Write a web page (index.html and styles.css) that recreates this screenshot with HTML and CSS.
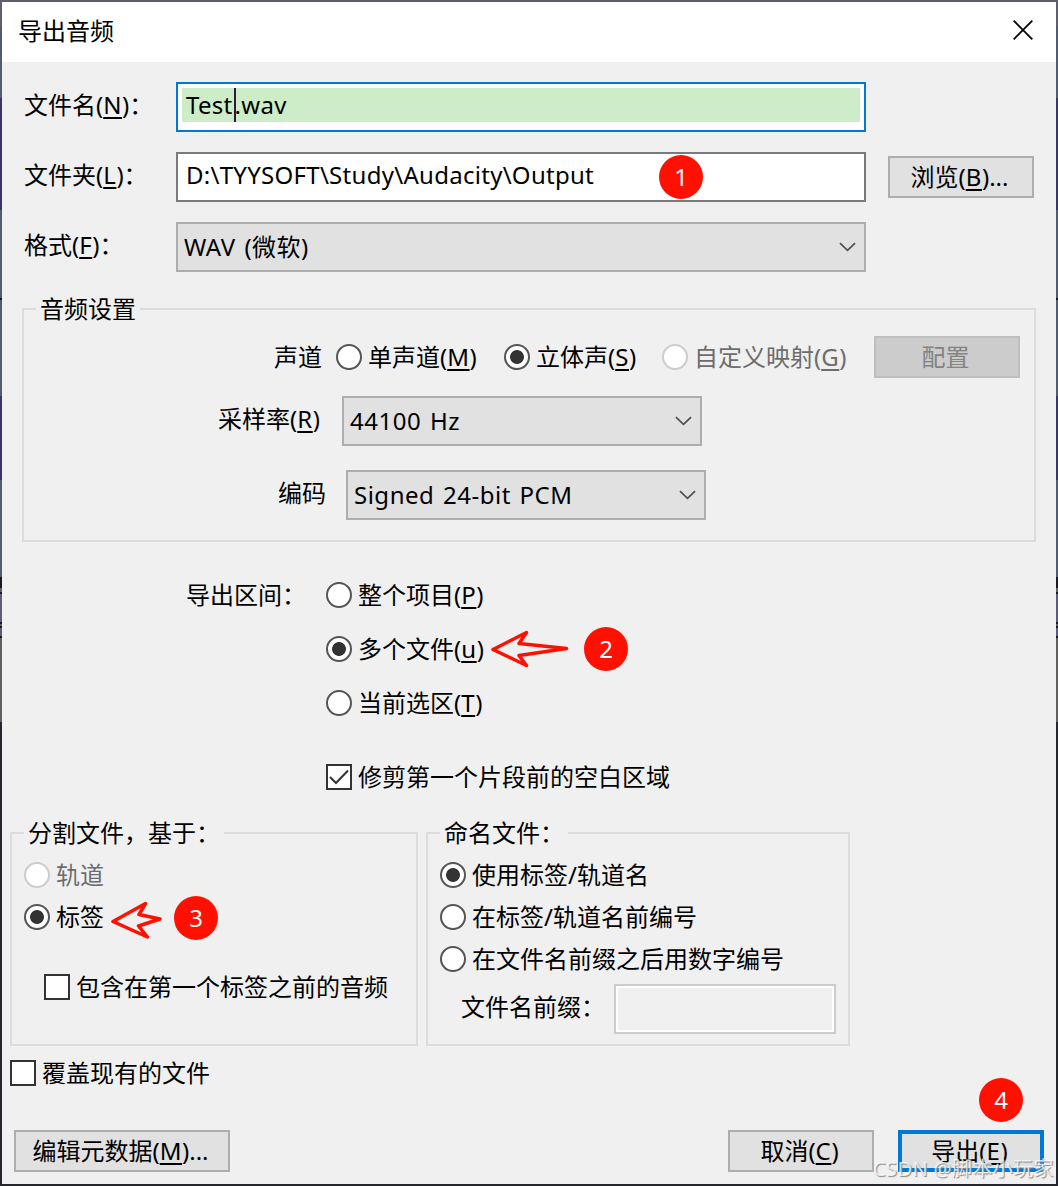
FILE: index.html
```html
<!DOCTYPE html>
<html lang="zh-CN">
<head>
  <meta charset="UTF-8">
  <meta name="viewport" content="width=device-width, initial-scale=1">
  <title>导出音频</title>
  <link rel="stylesheet" href="styles.css">
</head>
<body>
  <div class="window">
    <header class="titlebar">
      <h1>导出音频</h1>
      <svg class="close" viewBox="0 0 20 20"><path d="M.7.7l18.6 18.6M19.3.7L.7 19.3"/></svg>
    </header>

    <main class="dialog">
      <!-- File -->
      <section class="file-grid">
        <span class="label">文件名(<u>N</u>)：</span>
        <div class="textbox focused"><div class="value">Test<i class="caret"></i>.wav</div></div>
        <span></span>

        <span class="label">文件夹(<u>L</u>)：</span>
        <div class="textbox path">D:\TYYSOFT\Study\Audacity\Output<b class="badge badge-1">1</b></div>
        <button class="btn browse">浏览(<u>B</u>)...</button>

        <span class="label">格式(<u>F</u>)：</span>
        <div class="select">WAV (微软)<svg class="chevron" viewBox="0 0 18 10"><path d="M1 1l8 7.6L17 1"/></svg></div>
        <span></span>
      </section>

      <!-- Audio options -->
      <section class="group audio">
        <h2 class="legend">音频设置</h2>
        <div class="row channels">
          <span class="label">声道</span>
          <label class="option mono"><i class="radio"></i>单声道(<u>M</u>)</label>
          <label class="option stereo"><i class="radio checked"></i>立体声(<u>S</u>)</label>
          <label class="option custom disabled"><i class="radio"></i>自定义映射(<u>G</u>)</label>
          <button class="btn" disabled>配置</button>
        </div>
        <div class="row rate">
          <span class="label">采样率(<u>R</u>)</span>
          <div class="select">44100 Hz<svg class="chevron" viewBox="0 0 18 10"><path d="M1 1l8 7.6L17 1"/></svg></div>
        </div>
        <div class="row encoding">
          <span class="label">编码</span>
          <div class="select">Signed 24-bit PCM<svg class="chevron" viewBox="0 0 18 10"><path d="M1 1l8 7.6L17 1"/></svg></div>
        </div>
      </section>

      <!-- Export range -->
      <section class="range">
        <span class="label">导出区间：</span>
        <div class="range-options">
          <label class="option"><i class="radio"></i>整个项目(<u>P</u>)</label>
          <label class="option"><i class="radio checked"></i>多个文件(<u>u</u>)
            <svg class="arrow arrow-2" viewBox="0 0 78 38"><path d="M2 19.500L35.500 2.500 28 13.500 75.500 18.500 28 25.500 35.500 35.500z"/></svg>
            <b class="badge badge-2">2</b>
          </label>
          <label class="option"><i class="radio"></i>当前选区(<u>T</u>)</label>
          <label class="option trim"><i class="check"><svg viewBox="0 0 22 22"><path d="M2 11l6 6L20 4.500"/></svg></i>修剪第一个片段前的空白区域</label>
        </div>
      </section>

      <!-- Multiple files -->
      <section class="multi">
        <div class="group split">
          <h2 class="legend">分割文件，基于：</h2>
          <label class="option disabled"><i class="radio"></i>轨道</label>
          <label class="option"><i class="radio checked"></i>标签
            <svg class="arrow arrow-3" viewBox="0 0 52 38"><path d="M2 20.500L34.500 2.500 28 13.500 49 18 27.500 25 36.500 36z"/></svg>
            <b class="badge badge-3">3</b>
          </label>
          <label class="option include"><i class="check"></i>包含在第一个标签之前的音频</label>
        </div>
        <div class="group naming">
          <h2 class="legend">命名文件：</h2>
          <label class="option"><i class="radio checked"></i>使用标签/轨道名</label>
          <label class="option"><i class="radio"></i>在标签/轨道名前编号</label>
          <label class="option"><i class="radio"></i>在文件名前缀之后用数字编号</label>
          <div class="prefix"><span class="label">文件名前缀：</span><div class="textbox off"></div></div>
        </div>
      </section>

      <label class="option overwrite"><i class="check"></i>覆盖现有的文件</label>

      <footer class="actions">
        <button class="btn metadata">编辑元数据(<u>M</u>)...</button>
        <button class="btn cancel">取消(<u>C</u>)</button>
        <button class="btn primary">导出(<u>E</u>)<b class="badge badge-4">4</b></button>
      </footer>
    </main>
    <span class="watermark">CSDN @脚本小玩家</span>
  </div>
</body>
</html>
```
FILE: styles.css
```css
:root {
  --face: #f0f0f0;
  --control: #e1e1e1;
  --border: #adadad;
  --line: #dcdcdc;
  --blue: #0078d7;
  --red: #ff1000;
}
* {
  box-sizing: border-box;
  margin: 0;
  padding: 0;
}
body {
  width: 1058px;
  height: 1186px;
  overflow: hidden;
  padding: 2px;
  background: linear-gradient(#5f5f6b 0 26px, #525c6c 26px 98px, #3a3766 98px 210px, #525c6c 210px 298px, #15151c 298px 300px, #525c6c 300px 396px, #3a3766 396px 480px, #525c6c 480px 577px, #1a1a20 577px 588px, #62605f 588px 592px, #1a1a20 592px 594px, #5c5c78 594px 622px, #1a1a20 622px 624px, #62605f 624px 626px, #1a1a20 626px 628px, #5c5c78 628px 636px, #1a1a20 636px 638px, #62605f 638px 722px, #26262e 722px);
  color: #000;
  font: 24px/32px "Noto Sans", "Noto Sans CJK SC", sans-serif;
}
.window {
  position: relative;
  height: 1182px;
  background: var(--face);
}
h1, h2 {
  font-size: 24px;
  font-weight: 400;
}
u {
  letter-spacing: .6px;
  text-decoration-thickness: 2px;
  text-underline-offset: 3px;
}
.titlebar {
  display: flex;
  justify-content: space-between;
  align-items: center;
  height: 60px;
  padding: 0 23px 4px 16px;
  background: #fff;
}
.titlebar h1 { padding-top: 2px; }
.close {
  width: 20px;
  height: 20px;
  stroke: #000;
  stroke-width: 1.8;
}
.label, .option, .legend { white-space: nowrap; }

/* Controls */
.textbox, .select {
  height: 50px;
  border: 2px solid #7a7a7a;
  background: #fff;
}
.textbox.focused {
  padding: 4px;
  border-color: var(--blue);
}
.value {
  height: 34px;
  padding-left: 4px;
  background: #ccedc8;
  letter-spacing: .3px;
  line-height: 34px;
}
.caret {
  display: inline-block;
  width: 2px;
  height: 34px;
  margin: 0 -1px 0 1px;
  background: #301838;
  vertical-align: top;
}
.path {
  position: relative;
  padding: 5px 8px;
  letter-spacing: .28px;
}
.select {
  display: flex;
  justify-content: space-between;
  align-items: center;
  padding: 0 8px 0 6px;
  border-color: var(--border);
  background: var(--control);
  letter-spacing: .5px;
  word-spacing: 2px;
}
.chevron {
  width: 17px;
  height: 10px;
  fill: none;
  stroke: #505050;
  stroke-width: 1.8;
}
.btn {
  display: flex;
  justify-content: center;
  align-items: center;
  width: 146px;
  height: 42px;
  padding-right: 3px;
  border: 2px solid var(--border);
  background: var(--control);
  color: #000;
  font: inherit;
  white-space: nowrap;
}
.btn:disabled {
  border-color: #bfbfbf;
  background: #ccc;
  color: #838383;
}
.option {
  display: flex;
  align-items: center;
  position: relative;
}
.option.disabled { color: #6d6d6d; }
.radio, .check {
  flex: none;
  width: 26px;
  height: 26px;
  margin-right: 6px;
  border: 2px solid #333;
  background: #fff;
}
.radio {
  border-color: #555;
  border-radius: 50%;
}
.radio.checked {
  background: radial-gradient(circle, #333 0 6.5px, #fff 7.3px);
}
.disabled .radio { border-color: #ccc; }
.check svg {
  display: block;
  fill: none;
  stroke: #333;
  stroke-width: 2;
}
.group {
  border: 2px solid var(--line);
}
.legend {
  width: fit-content;
  background: var(--face);
}

/* File */
.file-grid {
  display: grid;
  grid-template-columns: 152px 690px 146px;
  grid-auto-rows: 50px;
  row-gap: 20px;
  padding: 20px 22px 0;
}
.file-grid .label { padding-top: 7px; }
.browse { margin: 4px 0 0 22px; }

/* Audio options */
.audio {
  height: 234px;
  margin: 36px 20px 0;
}
.audio .legend {
  margin: -17px 0 0 12px;
  padding: 0 4px;
}
.row {
  display: flex;
  align-items: center;
}
.channels {
  height: 42px;
  margin-top: 11px;
  padding-left: 250px;
}
.mono { width: 168px; margin-left: 14px; }
.stereo { width: 158px; }
.custom { width: 212px; }
.rate {
  margin-top: 18px;
  padding-left: 194px;
}
.rate .label { width: 124px; }
.encoding {
  margin-top: 24px;
  padding-left: 254px;
}
.encoding .label { width: 68px; }
.rate .label, .encoding .label { padding-bottom: 4px; }
.row .select { width: 360px; }

/* Export range */
.range {
  display: flex;
  margin-top: 37px;
  padding-left: 184px;
}
.range .label { width: 140px; }
.range-options .option {
  width: max-content;
  margin-bottom: 22px;
}
.range-options .trim { margin: 42px 0 0; }

/* Multiple files */
.multi {
  display: flex;
  gap: 8px;
  margin: 39px 0 0 8px;
}
.multi .group { height: 214px; }
.multi .legend {
  margin: -17px 0 0 12px;
  padding-left: 4px;
}
.split { width: 408px; }
.naming { width: 424px; }
.split .legend { width: 200px; }
.naming .legend { width: 128px; }
.multi .option {
  top: 5px;
  height: 42px;
  margin-left: 12px;
}
.multi .include { margin: 28px 0 0 32px; }
.prefix {
  display: flex;
  gap: 4px;
  margin: 9px 0 0 33px;
}
.prefix .label { width: 149px; padding-top: 7px; }
.textbox.off {
  width: 222px;
  border-color: #ccc;
  background: var(--face);
  box-shadow: inset 0 0 0 2px #fff;
}
.overwrite { margin: 11px 0 0 8px; }

.actions {
  display: flex;
  gap: 24px;
  margin: 41px 12px 0;
}
.metadata { width: 216px; }
.cancel { margin-left: auto; }
.primary {
  position: relative;
  border: 4px solid var(--blue);
}

/* Numbered callouts */
.badge {
  position: absolute;
  width: 44px;
  height: 44px;
  border-radius: 50%;
  background: var(--red);
  color: #fff;
  font-weight: 400;
  letter-spacing: 0;
  line-height: 44px;
  text-align: center;
}
.badge-1 { left: 481px; top: 1px; }
.badge-2 { left: 258px; top: -6px; }
.badge-3 { left: 150px; top: 0; }
.badge-4 { left: 77px; top: -56px; }
.arrow {
  position: absolute;
  fill: none;
  stroke: var(--red);
  stroke-width: 3.5;
  stroke-linejoin: round;
}
.arrow-2 {
  left: 165px;
  top: -3px;
  width: 78px;
  height: 38px;
}
.arrow-3 {
  left: 87px;
  top: 5px;
  width: 52px;
  height: 38px;
}
.watermark {
  position: absolute;
  right: 2px;
  bottom: -1px;
  color: rgba(255, 255, 255, .75);
  font-size: 20px;
  letter-spacing: .4px;
  line-height: 32px;
  text-shadow: 1px 1px 1px #888;
  white-space: nowrap;
}
```
